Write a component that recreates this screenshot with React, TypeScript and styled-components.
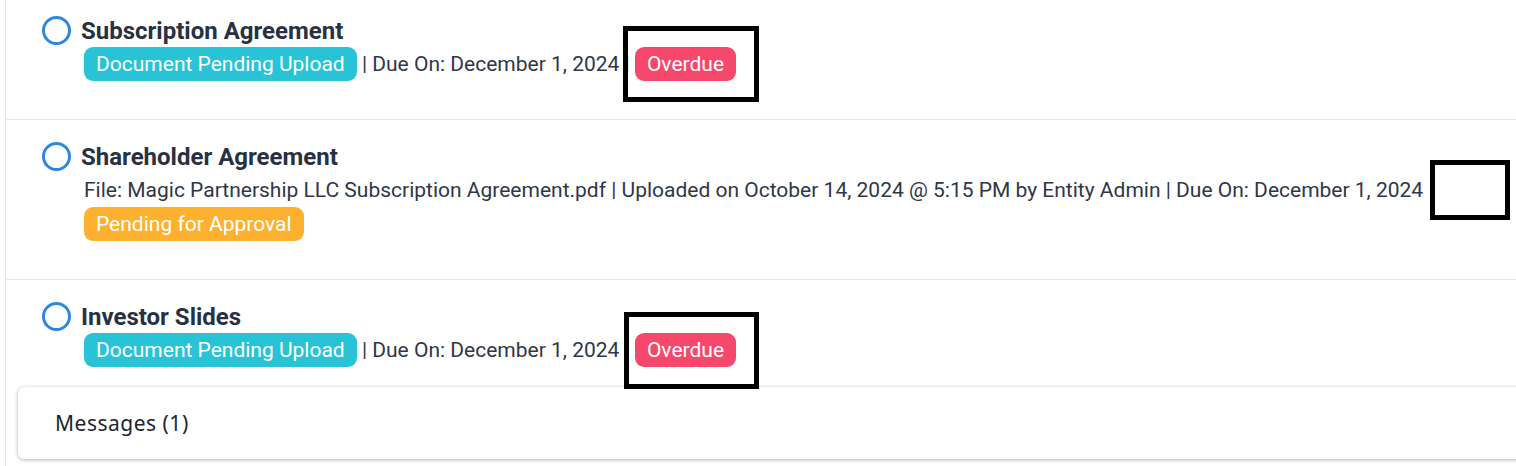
import React from "react";
import styled, { createGlobalStyle } from "styled-components";

const Global = createGlobalStyle`
  html, body { margin: 0; padding: 0; background: #ffffff; overflow: hidden; }
  body { font-family: Roboto, "Liberation Sans", sans-serif; }
`;

const Page = styled.div`
  width: 1516px;
  height: 466px;
  padding-left: 5px;
  box-sizing: border-box;
  overflow: hidden;
`;

const List = styled.div`
  margin-top: -6px;
  border-left: 1px solid #e4e4e4;
  min-height: 480px;
`;

const Row = styled.div<{ $last?: boolean }>`
  display: grid;
  grid-template-columns: 29px 1fr;
  column-gap: 10px;
  padding: 21px 0 ${(p) => (p.$last ? "20px" : "38px")} 36px;
  border-bottom: ${(p) => (p.$last ? "none" : "1px solid #e6e6e6")};
`;

const Check = styled.span`
  box-sizing: border-box;
  width: 29px;
  height: 29px;
  margin-top: 1px;
  border: 3px solid #2f86dc;
  border-radius: 50%;
`;

const Body = styled.div`
  display: flex;
  flex-direction: column;
  align-items: flex-start;
`;

const Title = styled.div`
  font-family: Roboto, "Liberation Sans", sans-serif;
  font-weight: 700;
  font-size: 24px;
  line-height: 32px;
  color: #283142;
`;

const Meta = styled.div`
  display: flex;
  align-items: center;
  margin-left: 3px;
  font-size: 21px;
  line-height: 32px;
  color: #2f3747;
  white-space: pre;
`;

const Badge = styled.span<{ $tone: "teal" | "orange" | "red" }>`
  position: relative;
  display: inline-flex;
  align-items: center;
  height: 34px;
  padding: 0 12px;
  border-radius: 9px;
  font-size: 21px;
  color: #ffffff;
  background: ${(p) =>
    p.$tone === "teal" ? "#29c3d8" : p.$tone === "orange" ? "#fdb12e" : "#f5486b"};
`;

const Slot = styled.span`
  position: relative;
  display: inline-block;
  width: 0;
  height: 34px;
`;

const Mark = styled.span<{ $l: number; $r: number; $t: number; $b: number }>`
  position: absolute;
  left: ${(p) => p.$l}px;
  right: ${(p) => p.$r}px;
  top: ${(p) => p.$t}px;
  bottom: ${(p) => p.$b}px;
  border: 5px solid #000000;
  pointer-events: none;
`;

const Card = styled.div`
  margin: 0 -40px 0 12px;
  height: 72px;
  display: flex;
  align-items: center;
  padding-left: 37px;
  background: #ffffff;
  border-radius: 6px;
  box-shadow: 0 1px 4px rgba(0, 0, 0, 0.28), 0 0 2px rgba(0, 0, 0, 0.06);
  font-family: "Noto Sans", Lato, sans-serif;
  font-size: 21px;
  letter-spacing: 0.5px;
  color: #1e2430;
`;

export default function App() {
  return (
    <Page>
      <Global />
      <List>
        <Row>
          <Check />
          <Body>
            <Title>Subscription Agreement</Title>
            <Meta>
              <Badge $tone="teal">Document Pending Upload</Badge>
              {" | Due On: December 1, 2024 | "}
              <Badge $tone="red">
                Overdue
                <Mark $l={-12} $r={-23} $t={-21} $b={-21} />
              </Badge>
            </Meta>
          </Body>
        </Row>
        <Row>
          <Check />
          <Body>
            <Title>Shareholder Agreement</Title>
            <Meta>
              {"File: Magic Partnership LLC Subscription Agreement.pdf | Uploaded on October 14, 2024 @ 5:15 PM by Entity Admin | Due On: December 1, 2024"}
              <Slot>
                <Mark $l={7} $r={-87} $t={-13} $b={-13} />
              </Slot>
            </Meta>
            <Meta>
              <Badge $tone="orange">Pending for Approval</Badge>
            </Meta>
          </Body>
        </Row>
        <Row $last>
          <Check />
          <Body>
            <Title>Investor Slides</Title>
            <Meta>
              <Badge $tone="teal">Document Pending Upload</Badge>
              {" | Due On: December 1, 2024 | "}
              <Badge $tone="red">
                Overdue
                <Mark $l={-11} $r={-23} $t={-21} $b={-22} />
              </Badge>
            </Meta>
          </Body>
        </Row>
        <Card>Messages (1)</Card>
      </List>
    </Page>
  );
}
